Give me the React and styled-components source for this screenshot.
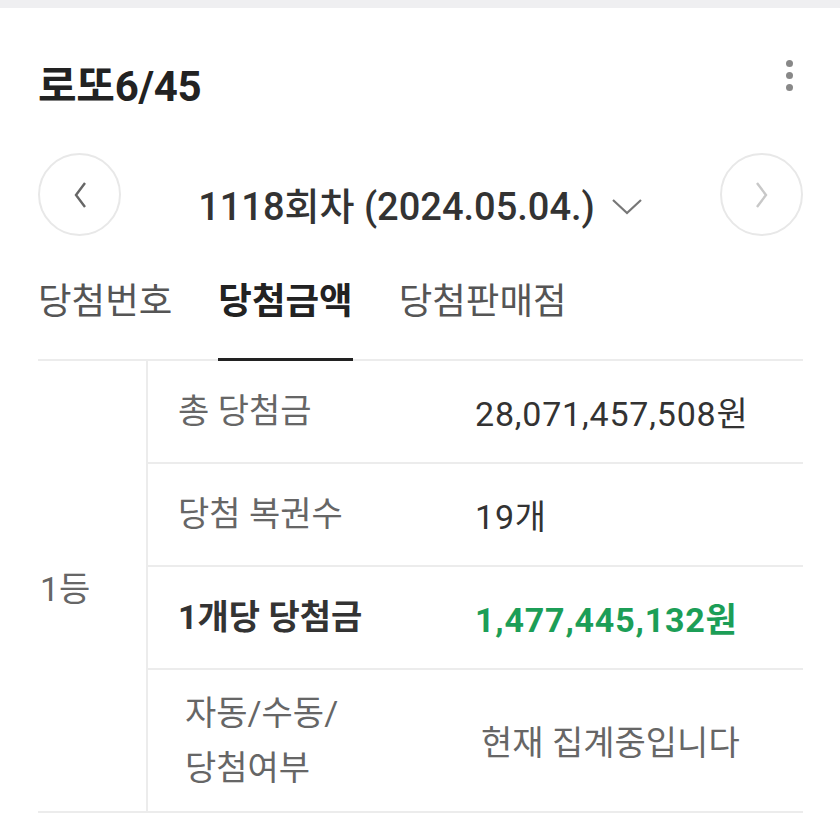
import React from "react";
import styled, { createGlobalStyle } from "styled-components";

const prizeRows = [
  { label: "총 당첨금", value: "28,071,457,508원" },
  { label: "당첨 복권수", value: "19개" },
  { label: "1개당 당첨금", value: "1,477,445,132원", strong: true },
  { label: ["자동/수동/", "당첨여부"], value: "현재 집계중입니다", muted: true, tall: true },
];

const tabs = ["당첨번호", "당첨금액", "당첨판매점"];

const App = () => {
  return (
    <>
      <GlobalStyle />
      <TopBar />
      <Page>
        <Header>
          <Title>로또6/45</Title>
          <Kebab>
            <Dot />
            <Dot />
            <Dot />
          </Kebab>
        </Header>

        <RoundNav>
          <CircleButton>
            <svg width="18" height="30" viewBox="0 0 18 30">
              <path d="M14 3 L5 15 L14 27" fill="none" stroke="#666" strokeWidth="2.4" />
            </svg>
          </CircleButton>
          <RoundTitle>
            1118회차 (2024.05.04.)
            <svg width="32" height="18" viewBox="0 0 32 18">
              <path d="M2 3 L16 16 L30 3" fill="none" stroke="#777" strokeWidth="2.2" />
            </svg>
          </RoundTitle>
          <CircleButton>
            <svg width="18" height="30" viewBox="0 0 18 30">
              <path d="M4 3 L13 15 L4 27" fill="none" stroke="#c8c8c8" strokeWidth="2.4" />
            </svg>
          </CircleButton>
        </RoundNav>

        <TabBar>
          {tabs.map((tab, i) => (
            <Tab key={tab} active={i === 1}>
              {tab}
            </Tab>
          ))}
        </TabBar>

        <PrizeTable>
          <RankCell>1등</RankCell>
          <RowList>
            {prizeRows.map((row, i) => (
              <Row key={i} tall={row.tall}>
                <Label strong={row.strong} tall={row.tall}>
                  {Array.isArray(row.label)
                    ? row.label.map((l) => <div key={l}>{l}</div>)
                    : row.label}
                </Label>
                <Value strong={row.strong} muted={row.muted}>
                  {row.value}
                </Value>
              </Row>
            ))}
          </RowList>
        </PrizeTable>
      </Page>
    </>
  );
};

export default App;

const GlobalStyle = createGlobalStyle`
  body {
    margin: 0;
    background: #fff;
    font-family: "Roboto", "Noto Sans CJK KR", sans-serif;
    color: #333;
  }
`;

const TopBar = styled.div`
  height: 8px;
  background: #efeff1;
`;

const Page = styled.div`
  padding: 0 37px 0 38px;
`;

const Header = styled.div`
  display: flex;
  justify-content: space-between;
  align-items: flex-start;
  height: 145px;
  padding-top: 54px;
  box-sizing: border-box;
`;

const Title = styled.h1`
  margin: 0;
  font-size: 42px;
  line-height: 50px;
  font-weight: 700;
  color: #222;
  letter-spacing: -0.3px;
`;

const Kebab = styled.div`
  display: flex;
  flex-direction: column;
  gap: 5px;
  margin-top: -2px;
  margin-right: 10px;
`;

const Dot = styled.span`
  width: 7px;
  height: 7px;
  border-radius: 50%;
  background: #888;
`;

const RoundNav = styled.div`
  display: flex;
  align-items: center;
  justify-content: space-between;
  height: 83px;
`;

const CircleButton = styled.div`
  width: 79px;
  height: 79px;
  border: 2px solid #e8e8e8;
  border-radius: 50%;
  display: flex;
  align-items: center;
  justify-content: center;
`;

const RoundTitle = styled.div`
  display: flex;
  align-items: center;
  gap: 16px;
  font-size: 38px;
  font-weight: 500;
  color: #333;
  padding-top: 18px;

  svg {
    margin-top: 4px;
  }
`;

const TabBar = styled.div`
  display: flex;
  gap: 46px;
  margin-top: 41px;
  border-bottom: 2px solid #ececec;
`;

const Tab = styled.div`
  font-size: 36.5px;
  line-height: 50px;
  padding-bottom: 31px;
  font-weight: ${(p) => (p.active ? 700 : 400)};
  color: ${(p) => (p.active ? "#222" : "#555")};
  border-bottom: 3px solid ${(p) => (p.active ? "#222" : "transparent")};
  margin-bottom: -2px;
`;

const PrizeTable = styled.div`
  display: grid;
  grid-template-columns: 110px 1fr;
  border-bottom: 2px solid #ececec;
`;

const RankCell = styled.div`
  display: flex;
  align-items: center;
  padding-left: 2px;
  font-size: 34px;
  color: #666;
  border-right: 2px solid #ececec;
`;

const RowList = styled.div`
  display: flex;
  flex-direction: column;
`;

const Row = styled.div`
  display: grid;
  grid-template-columns: 296px 1fr;
  height: ${(p) => (p.tall ? "141px" : "101px")};
  border-bottom: 2px solid #ececec;

  &:last-child {
    border-bottom: none;
  }
`;

const Label = styled.div`
  display: flex;
  flex-direction: column;
  justify-content: center;
  padding-left: ${(p) => (p.tall ? "37px" : "30px")};
  font-size: 34px;
  line-height: 55px;
  font-weight: ${(p) => (p.strong ? 700 : 400)};
  color: ${(p) => (p.strong ? "#333" : "#666")};
`;

const Value = styled.div`
  display: flex;
  align-items: center;
  padding-left: ${(p) => (p.muted ? "37px" : "31px")};
  font-size: 34px;
  letter-spacing: ${(p) => (p.muted ? "0" : "0.8px")};
  font-weight: ${(p) => (p.strong ? 700 : 400)};
  color: ${(p) => (p.strong ? "#1c9e57" : p.muted ? "#666" : "#333")};
`;
